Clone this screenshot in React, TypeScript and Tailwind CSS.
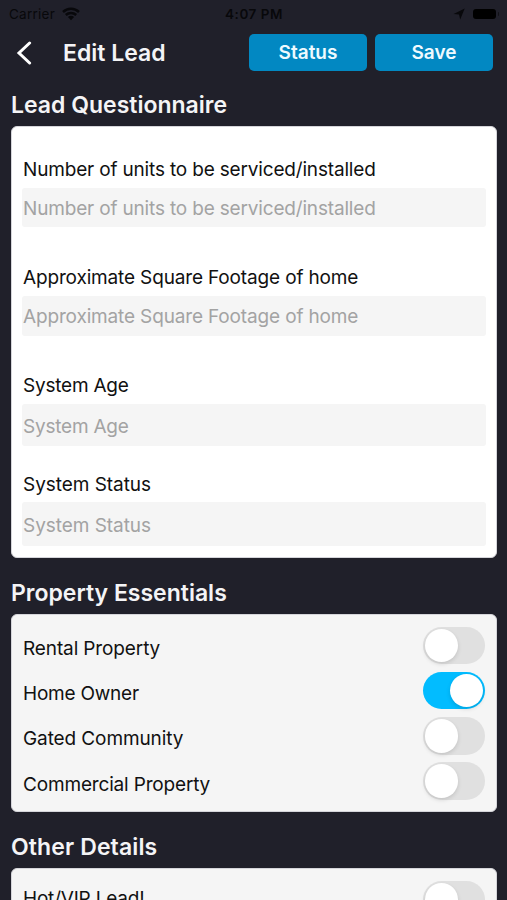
import type { ReactNode } from "react";

type FieldProps = { label: string; labelClass: string; inputClass: string; textClass: string };

function Field({ label, labelClass, inputClass, textClass }: FieldProps) {
  return (
    <div>
      <div className={`flex h-6 items-center whitespace-nowrap pl-px ${labelClass} ${textClass}`}>{label}</div>
      <input
        placeholder={label}
        className={`block w-full rounded-[3px] bg-[#f5f5f5] pl-px placeholder:text-[#a3a3a3] placeholder:opacity-100 outline-none ${inputClass} ${textClass}`}
      />
    </div>
  );
}

function Toggle({ on = false }: { on?: boolean }) {
  return (
    <div
      className={`flex h-[37.5px] w-[62.5px] shrink-0 items-center rounded-full px-[2px] ${
        on ? "justify-end bg-[#02bcff]" : "justify-start bg-[#e0e0e0]"
      }`}
    >
      <div className="size-[33.5px] rounded-full bg-white shadow-[0_2px_4px_rgba(0,0,0,0.13)]" />
    </div>
  );
}

function Row({ label, on, textClass }: { label: string; on?: boolean; textClass: string }) {
  return (
    <div className="flex h-[45.25px] items-start justify-between">
      <div className={`whitespace-nowrap leading-6 ${textClass}`}>{label}</div>
      <Toggle on={on} />
    </div>
  );
}

function Heading({ children, className }: { children: ReactNode; className: string }) {
  return (
    <h2 className={`flex items-center whitespace-nowrap text-[23px] font-semibold text-[#f4f4f6] ${className}`}>
      {children}
    </h2>
  );
}

const button =
  "flex h-[37px] w-[118px] items-center justify-center rounded-[5px] bg-[#0288c2] pt-[2px] text-[19px] font-semibold text-[#effaff]";

export default function App() {
  return (
    <div className="h-[900px] w-full overflow-hidden bg-[#20202a] font-['Inter',sans-serif] text-[19px] text-[#111]">
      <div className="grid h-[27px] grid-cols-3 items-center pl-[9px] pr-[8px] text-[13.5px] text-[#08080b]">
        <div className="flex items-center gap-[7px]">
          <span className="pt-px tracking-[0.25px]">Carrier</span>
          <svg width="18" height="14" viewBox="0 0 18 14" fill="none" stroke="currentColor" strokeWidth="2.5">
            <path d="M1 5a11.5 11.5 0 0 1 16 0M3.8 8a7.5 7.5 0 0 1 10.4 0" />
            <path d="M9 13.2 5.9 10a4.4 4.4 0 0 1 6.2 0Z" fill="currentColor" stroke="none" />
          </svg>
        </div>
        <div className="pt-px text-center font-semibold tracking-[0.5px]">4:07 PM</div>
        <div className="flex items-center justify-end gap-[8px]">
          <svg width="12" height="12" viewBox="0 0 12 12" fill="currentColor">
            <path d="M11.7.6 7.2 11.4 6 6.4 .6 6Z" />
          </svg>
          <div className="flex items-center gap-[2px]">
            <div className="h-[10px] w-[23px] rounded-[3px] bg-black" />
            <div className="h-[4px] w-px rounded-r bg-[#111116]" />
          </div>
        </div>
      </div>

      <header className="flex h-[51px] items-center pl-[16px] pr-[14px] text-white">
        <svg width="16" height="24" viewBox="0 0 16 24" fill="none" stroke="currentColor" strokeWidth="3" strokeLinecap="round">
          <path d="M13.6 2 3 12l10.6 10" />
        </svg>
        <h1 className="ml-[31px] pt-px text-[23px] font-semibold text-[#f4f4f6]">Edit Lead</h1>
        <div className="ml-auto flex gap-[8px]">
          <button className={button}>Status</button>
          <button className={button}>Save</button>
        </div>
      </header>

      <main className="pl-[11px] pr-[10px]">
        <Heading className="h-[48px] pt-[6px]">Lead Questionnaire</Heading>
        <section className="h-[432px] rounded-[6px] border border-[#d5d5da] bg-white px-[10px] pt-[31px]">
          <Field label="Number of units to be serviced/installed" labelClass="mb-[6px]" inputClass="h-[39px] pt-[2px]" textClass="tracking-[-0.17px]" />
          <Field label="Approximate Square Footage of home" labelClass="mt-[39px] mb-[6px]" inputClass="h-[40px]" textClass="tracking-[-0.15px]" />
          <Field label="System Age" labelClass="mt-[38px] mb-[6px]" inputClass="h-[42px] pt-[2px]" textClass="tracking-[-0.22px]" />
          <Field label="System Status" labelClass="mt-[27px] mb-[5px]" inputClass="h-[44px] pt-[2px]" textClass="tracking-[-0.05px]" />
        </section>

        <Heading className="h-[56px] pt-[14px]">Property Essentials</Heading>
        <section className="h-[198px] rounded-[6px] border border-[#d5d5da] bg-[#f5f5f5] pl-[11px] pr-[11px] pt-[11.5px]">
          <Row label="Rental Property" textClass="pt-[10.5px] tracking-[-0.12px]" />
          <Row label="Home Owner" on textClass="pt-[10.5px] tracking-[-0.22px]" />
          <Row label="Gated Community" textClass="pt-[9.5px] tracking-[-0.1px]" />
          <Row label="Commercial Property" textClass="pt-[10.5px] tracking-[-0.17px]" />
        </section>

        <Heading className="h-[56px] pt-[14px] tracking-[0.12px]">Other Details</Heading>
        <section className="h-[60px] rounded-[6px] border border-[#d5d5da] bg-[#f5f5f5] px-[11px] pt-[11.5px]">
          <Row label="Hot/VIP Lead!" textClass="pt-[6.5px] tracking-[-0.2px]" />
        </section>
      </main>
    </div>
  );
}
